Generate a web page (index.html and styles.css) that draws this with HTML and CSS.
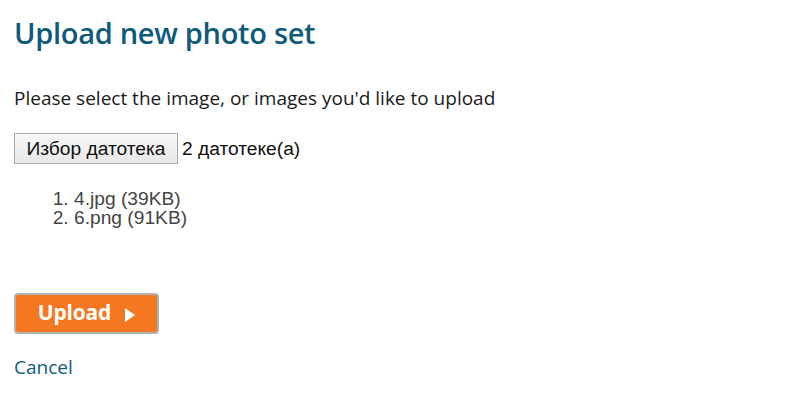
FILE: index.html
```html
<!DOCTYPE html>
<html>
<head>
<meta charset="utf-8">
<link rel="stylesheet" href="styles.css">
</head>
<body>
<div class="page">
  <h1 class="title">Upload new photo set</h1>
  <p class="intro">Please select the image, or images you'd like to upload</p>
  <div class="file-row">
    <button class="file-btn" type="button">Избор датотека</button>
    <span class="file-count">2 датотеке(а)</span>
  </div>
  <ol class="file-list">
    <li>4.jpg (39KB)</li>
    <li>6.png (91KB)</li>
  </ol>
  <button class="upload-btn" type="button"><span class="upload-label">Upload</span><span class="tri"></span></button>
  <a class="cancel" href="#">Cancel</a>
</div>
</body>
</html>
```
FILE: styles.css
```css
html, body { margin: 0; padding: 0; background: #fff; }
.page {
  padding: 15px 14px 0 14px;
  font-family: "Open Sans", "DejaVu Sans", sans-serif;
  color: #222;
  display: flex;
  flex-direction: column;
  align-items: flex-start;
}
.title {
  margin: 0;
  font-size: 29px;
  font-weight: 600;
  color: #0e5a7b;
  line-height: 36px;
  letter-spacing: -0.3px;
}
.intro {
  margin: 35px 0 0 0;
  font-size: 19px;
  line-height: 24px;
  color: #1a1a1a;
}
.file-row {
  margin-top: 23px;
  display: flex;
  align-items: center;
  gap: 4px;
  font-family: "Liberation Sans", Arial, sans-serif;
  font-size: 19.2px;
}
.file-btn {
  box-sizing: border-box;
  width: 164px;
  height: 31px;
  padding: 0;
  font-family: "Liberation Sans", Arial, sans-serif;
  font-size: 19.2px;
  border: 1px solid #a9a9a9;
  border-radius: 0;
  background: linear-gradient(#f7f7f7, #e8e8e8);
  color: #111;
}
.file-count { color: #111; }
.file-list {
  margin: 24.5px 0 0 0;
  padding-left: 60px;
  font-family: "Liberation Sans", Arial, sans-serif;
  font-size: 19.2px;
  line-height: 19.5px;
  color: #444;
}
.upload-btn {
  box-sizing: border-box;
  margin-top: 65.5px;
  width: 145px;
  height: 41px;
  background: #f47721;
  border: 2px solid #b3b3b3;
  border-radius: 4px;
  color: #fff;
  display: flex;
  align-items: center;
  justify-content: center;
  gap: 14px;
  padding: 0 0 4px 0;
}
.upload-label {
  font-family: "Open Sans", "DejaVu Sans", sans-serif;
  font-size: 21px;
  font-weight: 700;
  letter-spacing: -0.2px;
}
.tri {
  margin-top: 7px;
  width: 0; height: 0;
  border-top: 7px solid transparent;
  border-bottom: 7px solid transparent;
  border-left: 10px solid #fff;
}
.cancel {
  margin-top: 21px;
  font-size: 19px;
  line-height: 24px;
  color: #0e5a7b;
  text-decoration: none;
}
```
